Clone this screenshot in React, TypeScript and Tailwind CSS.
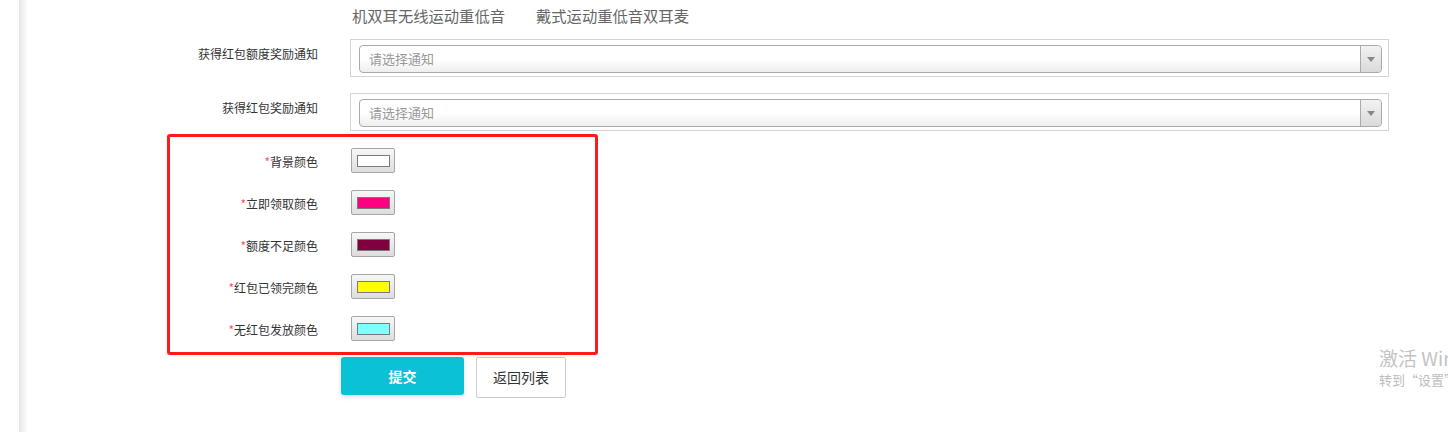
import React from "react";

const font = { fontFamily: '"Noto Sans CJK SC", "Microsoft YaHei", sans-serif' };

function Select() {
  return (
    <div className="ml-[32px] h-[38px] w-[1039px] border border-[#d4d4d4] pt-[5px] pl-[8px] pr-[6px]">
      <div className="flex h-[28px] rounded-[4px] border border-[#aaaaaa] bg-gradient-to-b from-white from-50% to-[#eeeeee]">
        <div className="flex flex-1 items-center pl-[9px] text-[13px] text-[#999999]">请选择通知</div>
        <div className="flex w-[21px] items-center justify-center rounded-r-[4px] border-l border-[#aaaaaa] bg-gradient-to-b from-[#f2f2f2] to-[#dadada]">
          <svg width="8" height="5" viewBox="0 0 8 5">
            <path d="M0 0 L8 0 L4 5 Z" fill="#888888" />
          </svg>
        </div>
      </div>
    </div>
  );
}

function Swatch({ color }: { color: string }) {
  return (
    <div className="ml-[33px] h-[25px] w-[44px] rounded-[2px] border border-[#a6a6a6] bg-gradient-to-b from-[#f7f7f7] to-[#dddddd] pt-[6px] pl-[5px]">
      <div className="h-[12px] w-[33px] border border-[#7a7a7a]" style={{ backgroundColor: color }} />
    </div>
  );
}

const colors: [string, string][] = [
  ["背景颜色", "#ffffff"],
  ["立即领取颜色", "#ff0080"],
  ["额度不足颜色", "#800040"],
  ["红包已领完颜色", "#ffff00"],
  ["无红包发放颜色", "#80ffff"],
];

export default function App() {
  return (
    <div className="relative flex h-[432px] w-[1448px] overflow-hidden bg-white" style={font}>
      <div className="w-[19px] shrink-0 bg-white" />
      <div className="w-[9px] shrink-0 bg-gradient-to-r from-[#e6e6e6] to-white" />
      <div className="flex flex-col pl-[139px]">
        <div className="flex h-[30px] items-center pl-[185px] text-[15.3px] text-[#666666]">
          <span>机双耳无线运动重低音</span>
          <span className="ml-[31px]">戴式运动重低音双耳麦</span>
        </div>
        <div className="mt-[9px] flex">
          <div className="w-[151px] pt-[5px] text-right text-[12px] leading-[20px] text-[#333333]">获得红包额度奖励通知</div>
          <Select />
        </div>
        <div className="mt-[16px] flex">
          <div className="w-[151px] pt-[5px] text-right text-[12px] leading-[20px] text-[#333333]">获得红包奖励通知</div>
          <Select />
        </div>
        <div className="mt-[3px] flex w-[431px] flex-col gap-[17px] rounded-[3px] border-[3px] border-[#ff1a1a] pt-[11px] pb-[11px]">
          {colors.map(([label, c]) => (
            <div key={label} className="flex h-[25px]">
              <div className="flex w-[148px] items-center justify-end pt-[3px] text-[12px] text-[#333333]">
                <span className="text-[#ff4d6a]">*</span>
                {label}
              </div>
              <Swatch color={c} />
            </div>
          ))}
        </div>
        <div className="mt-[2px] flex items-start pl-[174px]">
          <button className="h-[38px] w-[123px] rounded-[3px] bg-[#0bc1d5] text-[14px] font-bold text-white shadow-[0_2px_4px_rgba(160,100,220,0.25)]">
            提交
          </button>
          <button className="ml-[12px] h-[41px] w-[90px] rounded-[2px] border border-[#cccccc] bg-white text-[14px] text-[#333333]">
            返回列表
          </button>
        </div>
      </div>
      <div className="absolute left-[1379px] top-[346px] text-[#c4c4c4]">
        <div className="text-[19px] leading-[24px] whitespace-nowrap">激活 Windows</div>
        <div className="text-[13px] leading-[20px] whitespace-nowrap text-[#bdbdbd]">转到“设置”以激活 Windows。</div>
      </div>
    </div>
  );
}
